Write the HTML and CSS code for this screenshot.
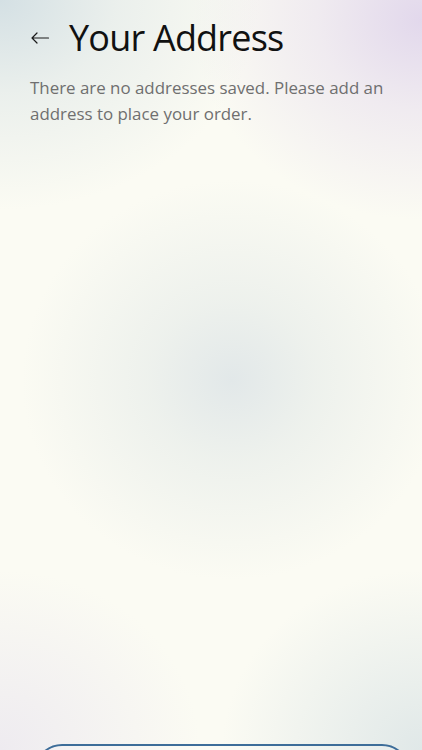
FILE: index.html
```html
<!DOCTYPE html>
<html lang="en">
<head>
<meta charset="utf-8">
<title>Your Address</title>
<link rel="stylesheet" href="styles.css">
</head>
<body>
<div class="screen">
  <header class="header">
    <button class="back" aria-label="Back">
      <svg width="20" height="14" viewBox="0 0 20 14" fill="none" stroke="#1a1a1a" stroke-width="1.2" stroke-linecap="round" stroke-linejoin="round">
        <path d="M18.5 7H2M7 2L2 7l5 5"/>
      </svg>
    </button>
    <h1 class="title">Your Address</h1>
  </header>
  <p class="message">There are no addresses saved. Please add an address to place your order.</p>
  <div class="spacer"></div>
  <div class="footer">
    <button class="add-btn" aria-label="Add Address"></button>
  </div>
</div>
</body>
</html>
```
FILE: styles.css
```css
html, body {
  margin: 0;
  padding: 0;
  height: 100%;
  overflow: hidden;
}
body {
  font-family: "Open Sans", "DejaVu Sans", sans-serif;
  background-color: #fbfbf3;
  background-image:
    radial-gradient(ellipse 210px 200px at 232px 380px, rgba(226,232,233,1) 0%, rgba(232,237,234,0.7) 40%, rgba(251,251,243,0) 100%),
    radial-gradient(ellipse 260px 210px at 0px 0px, rgba(212,224,228,1) 0%, rgba(224,232,232,0.6) 45%, rgba(251,251,243,0) 100%),
    radial-gradient(ellipse 230px 200px at 422px 20px, rgba(226,216,236,1) 0%, rgba(232,224,238,0.6) 45%, rgba(251,251,243,0) 100%),
    radial-gradient(ellipse 200px 180px at 0px 750px, rgba(238,235,240,1) 0%, rgba(251,251,243,0) 100%),
    radial-gradient(ellipse 200px 180px at 422px 750px, rgba(224,232,232,1) 0%, rgba(251,251,243,0) 100%);
  background-repeat: no-repeat;
}
.screen {
  height: 750px;
  display: flex;
  flex-direction: column;
  box-sizing: border-box;
  padding: 0 12px 0 30px;
}
.header {
  display: flex;
  align-items: center;
  gap: 18px;
  padding-top: 15px;
  height: 46px;
}
.back {
  border: none;
  background: none;
  padding: 0;
  width: 21px;
  height: 16px;
  display: flex;
  align-items: center;
  cursor: pointer;
}
.title {
  margin: 0;
  font-family: "Open Sans", sans-serif;
  font-weight: 400;
  font-size: 36px;
  letter-spacing: -0.8px;
  color: #111;
  line-height: 46px;
}
.message {
  margin: 14px 0 0;
  font-size: 16.9px;
  line-height: 26px;
  color: #6f6f6f;
}
.spacer {
  flex: 1;
}
.footer {
  display: flex;
  margin-left: 4px;
  height: 6px;
}
.add-btn {
  width: 376px;
  height: 56px;
  flex: none;
  border: 2px solid #3d6d99;
  border-radius: 28px;
  background: rgba(255,255,255,0.15);
  padding: 0;
}
```
